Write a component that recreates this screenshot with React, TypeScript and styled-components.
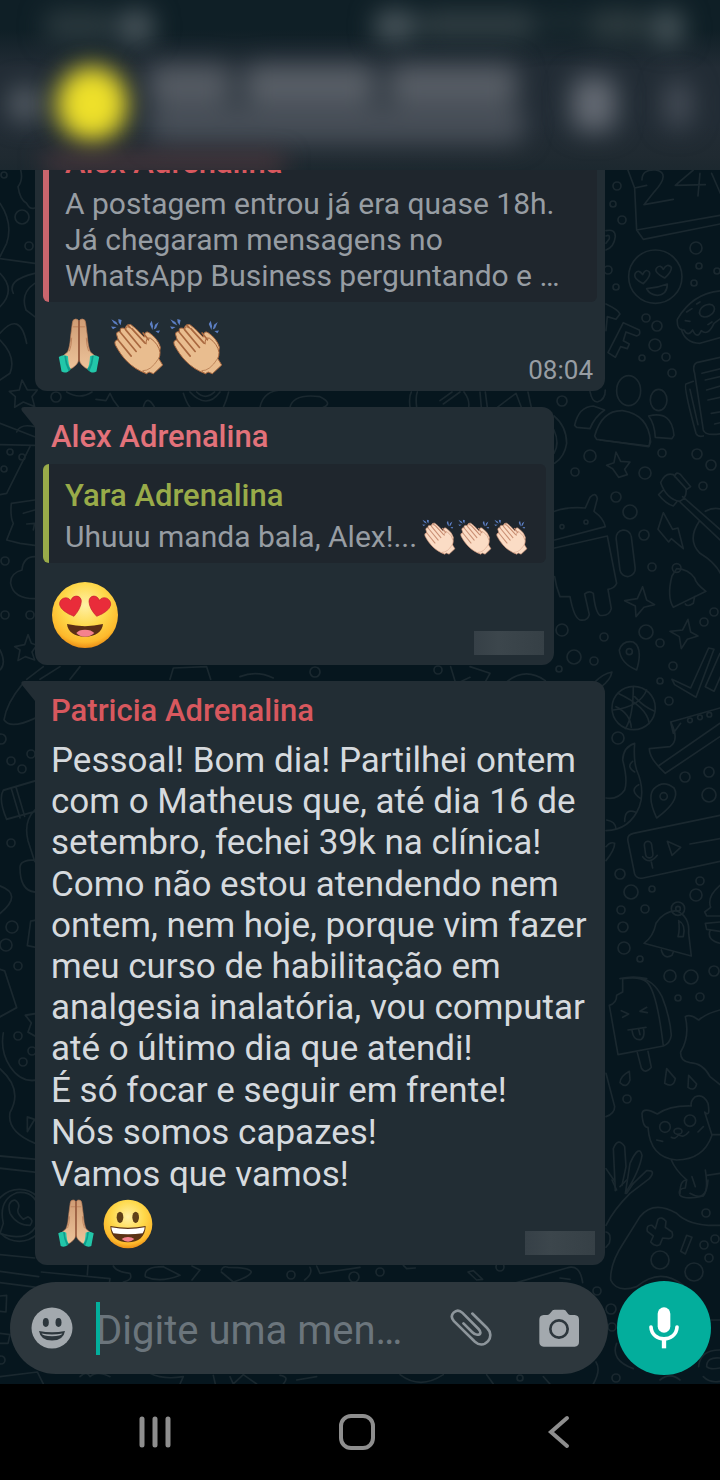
import React from "react";
import styled, { createGlobalStyle } from "styled-components";

const color = {
  wallpaper: "#06161e",
  doodle: "#1a282f",
  bubble: "#222d34",
  quote: "#1f262d",
  text: "#d6dade",
  muted: "#979da3",
  coral: "#e2727a",
  red: "#d8585e",
  olive: "#99ab49",
  teal: "#03ae9c",
  composer: "#2d373d",
  icon: "#a3a9ae",
};

const GlobalStyle = createGlobalStyle`
  * { box-sizing: border-box; }
  body { margin: 0; background: #000; font-family: Roboto, "Liberation Sans", sans-serif; }
  p { margin: 0; }
  button { border: 0; padding: 0; background: none; display: flex; align-items: center; justify-content: center; }
`;

const Screen = styled.div`
  display: flex;
  flex-direction: column;
  height: 100vh;
  overflow: hidden;
`;

/* ---------- header ---------- */

const Header = styled.header`
  position: relative;
  flex: none;
  height: 170px;
  overflow: hidden;
  background: linear-gradient(#0f1f26 0 30px, #222c35 68px 125px, #202a31 156px, #1c282f);
`;

const StatusBar = styled.div`
  display: flex;
  justify-content: space-between;
  height: 52px;
  padding: 10px 36px 0 44px;
  filter: blur(12px);
`;

const Cluster = styled.div`
  display: flex;
  gap: 4px;
`;

const Smudge = styled.span<{ $w: number; $h: number; $c: string }>`
  flex: none;
  width: ${(p) => p.$w}px;
  height: ${(p) => p.$h}px;
  border-radius: 12px;
  background: ${(p) => p.$c};
`;

const AppBar = styled.div`
  display: flex;
  align-items: center;
  height: 104px;
`;

const Back = styled.button`
  width: 50px;
  filter: blur(12px);
`;

const Avatar = styled.div`
  width: 72px;
  height: 76px;
  margin-left: 6px;
  border-radius: 50%;
  background: #eee02a;
  filter: blur(12px);
`;

const Title = styled.div`
  display: flex;
  flex-direction: column;
  gap: 2px;
  flex: 1;
  margin-left: 20px;
  filter: blur(13px);
`;

const TitleRow = styled.div`
  display: flex;
  gap: 12px;
`;

const HeaderButton = styled.button`
  width: 84px;
  filter: blur(13px);
`;

const Glow = styled.div`
  position: absolute;
  left: 44px;
  bottom: 0;
  width: 240px;
  height: 14px;
  background: #583a40;
  filter: blur(12px);
`;

/* ---------- conversation ---------- */

const Chat = styled.main`
  position: relative;
  flex: 1;
  min-height: 0;
  display: flex;
  flex-direction: column;
  justify-content: flex-end;
  overflow: hidden;
  background: ${color.wallpaper};
`;

const Wallpaper = styled.svg`
  position: absolute;
  inset: 0;
  width: 100%;
  height: 100%;
  fill: none;
  stroke: ${color.doodle};
  stroke-width: 5;
  stroke-linejoin: round;
  stroke-linecap: round;
`;

const Thread = styled.section`
  position: relative;
  display: flex;
  flex-direction: column;
  align-items: flex-start;
  gap: 16px;
  padding: 0 35px 16px;
`;

const Bubble = styled.article<{ $wide?: boolean }>`
  position: relative;
  max-width: 570px;
  width: ${(p) => (p.$wide ? "100%" : "fit-content")};
  padding: 12px 8px 10px;
  border-radius: 12px;
  background: ${color.bubble};
`;

const Tail = styled.svg`
  position: absolute;
  top: 0;
  left: -14px;
  width: 28px;
  height: 22px;
  fill: ${color.bubble};
`;

const Name = styled.h2<{ $c: string; $inset?: boolean }>`
  margin: 0;
  padding: 0 ${(p) => (p.$inset ? 8 : 0)}px;
  font-size: 31px;
  line-height: 36px;
  font-weight: 500;
  white-space: nowrap;
  color: ${(p) => p.$c};
`;

const Quote = styled.blockquote<{ $c: string }>`
  margin: 9px 0 0;
  padding: 14px 17px 8px 16px;
  border-left: 6px solid ${(p) => p.$c};
  border-radius: 6px;
  background: ${color.quote};
`;

const QuoteText = styled.p`
  display: flex;
  align-items: center;
  margin-top: 5px;
  font-size: 30px;
  line-height: 36px;
  white-space: pre-line;
  color: ${color.muted};
`;

const InlineEmojis = styled.span`
  display: flex;
  margin-left: 4px;
`;

const Body = styled.div`
  display: flex;
  flex-direction: column;
  gap: 1px;
  margin-top: 11px;
  padding: 0 8px;
  font-size: 35px;
  line-height: 41px;
  color: ${color.text};
`;

const Footer = styled.div<{ $top: number }>`
  display: flex;
  align-items: flex-end;
  justify-content: space-between;
  margin-top: ${(p) => p.$top}px;
  padding: 0 2px 0 8px;
`;

const Emojis = styled.div<{ $gap?: number }>`
  display: flex;
  gap: ${(p) => p.$gap ?? 0}px;
  padding-bottom: 6px;
`;

const Time = styled.time`
  padding-right: 2px;
  font-size: 26px;
  line-height: 22px;
  color: ${color.muted};
`;

const HiddenTime = styled.span`
  width: 70px;
  height: 24px;
  background: linear-gradient(90deg, #364047, #3c464c 35%, #364046);
`;

/* ---------- composer ---------- */

const Composer = styled.form`
  position: relative;
  display: flex;
  align-items: center;
  gap: 9px;
  padding: 0 9px 9px 10px;
`;

const Field = styled.div`
  flex: 1;
  min-width: 0;
  display: flex;
  align-items: center;
  height: 92px;
  padding: 0 28px 0 21px;
  border-radius: 46px;
  background: ${color.composer};
`;

const InputWrap = styled.label`
  position: relative;
  flex: 1;
  min-width: 0;
  margin-left: 23px;
  &::before {
    content: "";
    position: absolute;
    left: 0;
    top: 0;
    width: 4px;
    height: 53px;
    background: ${color.teal};
  }
`;

const Input = styled.input`
  display: block;
  width: 100%;
  height: 53px;
  border: 0;
  padding: 4px 0 0;
  outline: 0;
  background: none;
  font-family: inherit;
  font-size: 40px;
  color: ${color.text};
  &::placeholder { color: #6b757c; opacity: 1; }
`;

const Tools = styled.div`
  display: flex;
  align-items: center;
  gap: 46px;
`;

const Mic = styled.button`
  flex: none;
  width: 94px;
  height: 94px;
  border-radius: 50%;
  background: ${color.teal};
`;

const NavBar = styled.nav`
  flex: none;
  display: flex;
  align-items: center;
  justify-content: space-around;
  height: 96px;
  padding: 0 61px 0 55px;
  background: #000;
`;

/* ---------- drawings ---------- */

const Pray = ({ w, h }: { w: number; h: number }) => (
  <svg width={w} height={h} viewBox="-10 0 145 168" role="img" aria-label="Mãos unidas">
    <defs>
      <linearGradient id="praySkin" x1="0" y1="0" x2="0" y2="1">
        <stop offset="0" stopColor="#cf9c74" />
        <stop offset="1" stopColor="#edc49b" />
      </linearGradient>
    </defs>
    {[undefined, "translate(125 0) scale(-1 1)"].map((t, i) => (
      <g key={i} transform={t}>
        <path d="M62 10Q60 3 53 3Q44 3 43 14L38 52Q36 85 29 100L14 113L33 152Q58 142 62 122Z" fill="url(#praySkin)" stroke="#b97c56" strokeWidth="2" />
        <path d="M45 26H60M41 58Q40 84 34 98" stroke="#b97c56" strokeWidth="2.5" fill="none" />
        <path d="M3 115Q16 106 30 113Q31 140 38 150Q26 166 11 158Q8 140 3 115Z" fill="#22c7a9" />
        <path d="M25 112Q26 138 38 150L32 158Q21 135 19 111Z" fill="#109b8c" />
      </g>
    ))}
    <path d="M62.500 8V128" stroke="#8f4f34" strokeWidth="4" />
  </svg>
);

const Clap = ({ w, h, light }: { w: number; h: number; light?: boolean }) => {
  const skin = light ? "#fbdcc5" : "#e9bd8f";
  const edge = light ? "#c98f74" : "#a9683f";
  return (
    <svg width={w} height={h} viewBox="0 0 172 172" role="img" aria-label="Palmas">
      <g fill="#5c7fc4">
        <path d="M7 4L22 12L28 23L15 16ZM28 3L38 6L35 22L29 13ZM6 26L23 27L12 34Z" />
        <path d="M129 8L133 25L131 36L123 18ZM150 12L142 31L135 35L139 20ZM154 38L140 39L149 46Z" />
      </g>
      <path d="M48 36Q50 18 66 20L82 33L106 58Q108 35 122 45Q147 62 155 88L149 126L92 122Z" fill={skin} stroke={edge} strokeWidth="3" />
      <path d="M113 168C66 151 39 119 19 81Q14 67 28 66L23 50Q22 39 35 42Q30 28 45 31L50 35Q52 21 67 31L112 79Q111 57 125 61Q150 79 154 104Q154 116 150 122L162 142L134 168L121 163Z" fill={skin} stroke={edge} strokeWidth="3" strokeLinejoin="round" />
      <path d="M28 67L67 115M34 43L82 101M50 35L95 89M69 32L108 75M103 45L119 66M57 22L64 29" stroke={edge} strokeWidth="5" fill="none" strokeLinecap="round" />
      <path d="M113 168Q104 164 102 159Q126 160 150 122" fill="none" stroke={edge} strokeWidth="2" />
    </svg>
  );
};

const FaceGradient = ({ id }: { id: string }) => (
  <defs>
    <radialGradient id={id} cx=".5" cy=".35" r=".66">
      <stop offset="0" stopColor="#fff0a6" />
      <stop offset=".5" stopColor="#fed94b" />
      <stop offset=".85" stopColor="#fdb92c" />
      <stop offset="1" stopColor="#e98a14" />
    </radialGradient>
  </defs>
);

const HeartEyes = () => (
  <svg width="68" height="68" viewBox="153 541 204 204" role="img" aria-label="Olhos de coração">
    <FaceGradient id="faceA" />
    <circle cx="255" cy="643" r="99" fill="url(#faceA)" />
    <g fill="#e92c3a" stroke="#c4202f" strokeWidth="2">
      <path d="M222 647Q184 632 179 613C176 593 202 583 212 600C219 580 244 583 244 602Q243 623 222 647Z" />
      <path d="M290 647Q268 624 267 603C267 583 291 580 298 599C309 583 334 593 332 613Q327 633 290 647Z" />
    </g>
    <path d="M201 670Q255 683 309 670C307 694 286 708 255 708S203 694 201 670Z" fill="#5b2f16" />
    <path d="M229 697Q236 687 255 687T283 697Q272 708 255 708T229 697Z" fill="#f5828e" />
  </svg>
);

const Grin = () => (
  <svg width="50" height="50" viewBox="311 57 150 150" role="img" aria-label="Sorriso">
    <FaceGradient id="faceB" />
    <circle cx="386" cy="132" r="73" fill="url(#faceB)" />
    <g fill="#5f4018">
      <ellipse cx="362" cy="112" rx="10" ry="17" />
      <ellipse cx="409" cy="112" rx="10" ry="17" />
    </g>
    <path d="M333 138Q386 148 439 138C438 170 418 187 386 187S334 170 333 138Z" fill="#5b3315" />
    <path d="M336 142Q386 152 436 142Q436 152 430 160Q386 166 342 160Q336 152 336 142Z" fill="#fff" />
    <path d="M367 177Q374 171 386 171T405 177Q396 185 386 185T367 177Z" fill="#f5828e" />
  </svg>
);

const SmileyIcon = () => (
  <svg width="42" height="42" viewBox="0 0 42 42" aria-hidden="true">
    <circle cx="21" cy="21" r="20.500" fill={color.icon} />
    <g fill={color.composer}>
      <ellipse cx="14.800" cy="15.500" rx="3" ry="4.400" />
      <ellipse cx="27.500" cy="15.500" rx="3" ry="4.400" />
      <path d="M8 24Q21 26.500 34 24Q32.500 33.500 21 33.500T8 24Z" />
    </g>
    <path d="M10.500 26.500Q21 28.700 31.500 26.500Q30 29.300 21 29.300T10.500 26.500Z" fill={color.icon} />
  </svg>
);

const ClipIcon = () => (
  <svg width="42" height="40" viewBox="269 387 128 118" fill="none" stroke="#8d959b" strokeWidth="8" strokeLinecap="round" strokeLinejoin="round" aria-hidden="true">
    <path d="M337 402L382 446C394 458 395 475 385 486C373 499 357 499 345 488L281 425C273 416 272 407 280 399C288 391 298 391 307 400L356 449C364 457 363 466 356 466C350 468 343 465 337 459L310 432" />
  </svg>
);

const CameraIcon = () => (
  <svg width="42" height="40" viewBox="534 380 126 118" aria-hidden="true">
    <path d="M571 394L578 386Q580 384 584 384H610Q614 384 616 386L624 396Q626 400 632 400H644Q657 401 657 414V481Q657 494 644 495H551Q538 494 538 481V414Q538 401 551 400H562Q567 400 571 394Z" fill={color.icon} />
    <circle cx="597" cy="442" r="26" fill="none" stroke={color.composer} strokeWidth="8" />
  </svg>
);

const MicIcon = () => (
  <svg width="32" height="44" viewBox="866 380 96 132" aria-hidden="true">
    <rect x="895" y="384" width="38" height="76" rx="19" fill="#fff" />
    <path d="M875 443C877 490 951 490 953 443" fill="none" stroke="#fff" strokeWidth="11" strokeLinecap="round" />
    <path d="M914 479V507" stroke="#fff" strokeWidth="13" />
  </svg>
);

/* Rings are listed as [x, y, radius] in window coordinates. */
const rings: number[][] = [
  [617, 186, 4], [613, 204, 3], [622, 220, 4], [616, 287, 3], [608, 270, 4], [696, 248, 6], [699, 266, 3], [694, 283, 3], [717, 271, 3],
  [646, 318, 4], [657, 326, 5], [655, 345, 6], [642, 358, 3], [666, 357, 4], [672, 373, 4], [562, 401, 5], [590, 456, 6], [697, 454, 5], [662, 453, 4], [711, 465, 5],
  [575, 472, 4], [645, 473, 6], [703, 486, 4], [616, 497, 5], [630, 512, 7], [644, 535, 5], [652, 567, 4], [714, 612, 4],
  [704, 622, 4], [562, 630, 6], [604, 637, 4], [646, 632, 7], [660, 643, 4], [574, 657, 7], [594, 661, 4], [559, 669, 3], [673, 666, 4], [660, 681, 3], [669, 701, 4],
  [618, 738, 6], [685, 777, 5], [709, 772, 5], [709, 795, 7], [620, 874, 5], [631, 892, 7], [652, 889, 3], [700, 881, 4], [696, 895, 6], [621, 910, 4], [645, 909, 4],
  [623, 927, 5], [624, 948, 6], [640, 959, 3], [670, 976, 6], [691, 977, 7], [714, 971, 5], [678, 998, 3], [700, 997, 4], [627, 1099, 4], [706, 1213, 4], [704, 1245, 4],
  [715, 1239, 4], [709, 1258, 4], [660, 1260, 9], [694, 1272, 9], [597, 1291, 4], [611, 1309, 5], [612, 1327, 4], [616, 1378, 4],
  [4, 175, 3], [22, 217, 7], [29, 246, 4], [56, 397, 5], [10, 452, 3], [22, 457, 3], [4, 469, 3], [5, 561, 4], [5, 615, 4], [30, 615, 4],
  [1, 739, 5], [11, 761, 4], [22, 769, 4], [31, 754, 4], [11, 843, 4], [12, 927, 6], [6, 945, 6], [18, 966, 4], [18, 1036, 4], [23, 1062, 4], [32, 1051, 4],
  [1, 1360, 4], [291, 1275, 4], [354, 1277, 5], [380, 1272, 4], [438, 670, 4], [315, 672, 5], [520, 1378, 3], [500, 1267, 4],
];

const Doodles = () => (
  <Wallpaper viewBox="0 170 720 1214" preserveAspectRatio="xMidYMid slice" aria-hidden="true">
    <g strokeWidth="1.700">
      {rings.map(([x, y, r], i) => (
        <circle key={i} cx={x} cy={y} r={r} />
      ))}
    </g>
    {/* calendar, heart-eyed face, donut, people, notebook */}
    <g transform="translate(360 160) scale(.3333)">
      <path d="M800 20L824 84L830 210L850 238L1090 190M830 210L1080 166M824 84L860 76M846 60Q846 28 886 30Q934 38 884 94L852 134L940 118M1000 30L946 76L1036 74M1020 40L1014 108M1055 40L1090 120" />
      <circle cx="886" cy="350" r="80" />
      <path d="M850 371Q818 356 826 340Q836 326 848 344Q856 324 868 336Q874 348 850 371ZM914 354Q880 336 890 324Q902 312 910 328Q922 308 934 322Q936 336 914 354ZM860 386Q892 384 922 372Q922 404 892 406Q868 404 860 386ZM738 212Q766 206 766 230Q762 262 738 270M738 228Q750 222 748 236L738 250" />
      <path d="M1090 392Q1000 396 952 478Q950 512 972 510Q984 532 998 510Q1012 540 1024 512Q1044 530 1062 490L1090 470M964 508Q976 550 1020 550L1090 530M980 456L996 446M1010 432L1020 426M976 482L990 484M1044 494L1056 486" />
      <ellipse cx="1041" cy="452" rx="24" ry="17" transform="rotate(-30 1041 452)" />
      <path d="M738 432Q776 450 780 462L768 478L742 470L738 512M790 488L838 510Q844 524 830 528L798 516L790 542L808 552L802 566L782 560L766 592L744 578Z" />
      <ellipse cx="806" cy="692" rx="36" ry="45" /><ellipse cx="896" cy="720" rx="25" ry="32" /><path d="M690 694Q696 726 712 726Q736 720 736 690" />
      <path d="M704 828Q726 750 788 752Q866 764 872 846L866 860L710 838ZM644 796Q656 740 700 738L734 750Q704 770 690 806L650 802ZM866 768Q936 750 942 826L936 836L886 832Q884 792 866 768ZM582 768Q620 800 620 850Q614 890 584 910M582 810Q600 850 582 880" />
      <path d="M1090 590L1010 608Q996 616 1004 640L1030 810Q1036 830 1090 820M1000 664L978 672Q970 680 1008 820Q1014 832 1030 828M1026 640L1090 624M1036 660L1090 648M1040 690L1090 676M1044 720L1090 710M1054 760L1090 754M1064 792L1090 786M990 688L1014 794" />
      <path d="M150 742Q146 710 154 696M170 742Q166 710 172 696M240 722L276 696M250 732L300 696M312 696Q330 720 326 742M360 696L364 742M376 696L382 742M412 742L468 700L484 742M504 696L514 742" />
    </g>
    {/* android, guitar, bell, stars, basketball, shoe */}
    <g transform="translate(400 440) scale(.3333)">
      <path d="M464 214Q500 200 556 204L570 172Q588 154 592 176L582 214Q612 236 616 260L464 300M464 324L622 288L650 430Q644 446 624 448L634 506Q628 530 600 526Q586 516 580 460Q568 450 554 462L568 524Q562 544 540 540Q522 534 510 470L480 470Q468 440 464 410" />
      <circle cx="486" cy="260" r="6" /><circle cx="558" cy="246" r="6" />
      <rect x="654" y="270" width="46" height="140" rx="23" transform="rotate(-7 677 340)" />
      <path d="M648 36L662 64L690 66L674 88L682 104L656 112L638 86L620 76L642 68ZM600 0L748 18L750 0M782 128Q796 96 820 104L858 146Q862 172 840 184Q800 178 782 128ZM824 110Q828 92 842 104L872 140L858 150M788 152L776 164Q796 190 820 198L830 186M848 170L960 268M840 186L960 300M898 244Q860 300 900 340Q950 370 966 410M916 214Q940 200 966 208" />
      <path d="M790 218L774 268L806 306L814 296L850 326L834 264L818 268ZM830 386L816 408Q800 470 820 502L918 454Q888 432 884 414Q866 388 830 386ZM856 492Q862 502 880 490L884 470M728 440L740 480L764 494L732 502L708 530L706 498L674 482L712 476ZM864 538L872 576L894 588L862 598L844 626L838 590L810 574L848 570Z" />
      <circle cx="830" cy="384" r="13" /><circle cx="688" cy="635" r="9" />
      <path d="M710 690Q662 670 658 630Q668 600 700 606Q730 624 710 690ZM816 718L872 744L926 624L942 628L888 772L824 734ZM960 640L916 740L942 754L966 700M580 730Q610 700 636 696Q632 720 604 740M320 726Q376 680 436 722M152 680L166 726M210 680L270 700L256 726M180 726L210 712" />
      <circle cx="701" cy="804" r="65" />
      <path d="M654 760Q740 800 748 850M640 810Q720 800 740 750M700 740Q700 830 676 866M704 770Q730 800 764 814M648 800Q690 820 694 862M960 804L812 846Q840 900 810 920L748 926Q748 956 796 1000L960 890M812 846L820 880L842 850M778 976L960 850" />
      <circle cx="870" cy="841" r="7" /><circle cx="900" cy="832" r="7" /><circle cx="928" cy="824" r="7" />
    </g>
    {/* tentacle, map pin, voice note, bell */}
    <g transform="translate(590 680) scale(.3333)">
      <path d="M134 190Q100 200 98 240Q114 300 104 330Q84 360 48 354M134 190Q130 240 140 270Q166 330 148 380Q120 450 48 452M128 244Q108 260 134 276M146 314Q116 330 152 356M104 424Q104 384 136 396M50 420Q76 424 78 446M200 414Q170 350 192 326Q220 298 252 324Q274 360 200 414ZM390 406L130 460Q110 464 114 484L134 582Q140 598 160 594L390 544M300 492L390 476M232 484L272 502L246 526ZM48 500Q60 484 74 490Q74 510 48 542" />
      <circle cx="221" cy="349" r="11" />
      <rect x="165" y="484" width="22" height="50" rx="11" transform="rotate(-8 176 509)" />
      <path d="M158 530Q178 556 202 526M184 546L188 564M162 790Q190 770 198 730Q220 694 260 692Q300 710 296 760L304 828ZM214 810Q222 840 246 826L250 816M266 722Q288 732 280 770L264 770Q270 750 266 722" />
      <circle cx="264" cy="686" r="20" /><circle cx="264" cy="686" r="7" />
      <path d="M390 616Q350 650 362 682L344 696L350 708L390 708M390 726L346 730L350 748L390 754M360 752Q350 780 390 790M90 896Q130 886 170 896" />
    </g>
    {/* ice lolly, splash, kitten, plant, game controller */}
    <g transform="translate(590 960) scale(.3333)">
      <path d="M98 56Q150 48 170 66Q200 90 220 258L84 284L58 136Q80 130 80 106L98 96ZM150 54Q190 60 216 110Q240 170 244 226Q240 250 220 258M142 278L154 324Q166 344 184 322L174 274M94 152L116 162L98 172M170 142L150 154L172 158M114 210L168 202M126 210Q130 244 154 238Q166 230 160 204M146 208L150 224" />
      <path d="M118 334Q90 350 90 368Q110 388 120 360ZM230 326L256 356Q250 386 224 370ZM296 346L320 372Q314 396 294 382ZM390 150Q350 160 326 180Q300 160 286 170Q300 230 272 276Q270 304 300 308Q340 310 360 350L390 374" />
      <path d="M202 462Q160 440 156 460Q158 504 174 502Q180 594 260 600Q340 600 366 526L344 456Q362 474 354 430Q340 400 316 410Q300 424 304 438Q240 436 202 462ZM244 532Q256 540 266 524Q280 536 296 516M200 540L218 544M324 516L340 500M244 600Q256 630 290 660L286 684Q262 686 270 706Q286 720 340 708Q356 690 346 630M390 640L350 646M306 650L316 680M366 524L390 524" />
      <circle cx="225" cy="501" r="16" /><circle cx="300" cy="482" r="17" /><ellipse cx="264" cy="514" rx="12" ry="9" />
      <path d="M76 692L70 566Q84 530 104 560L108 620L96 676M106 700L120 610Q148 550 156 586Q150 630 106 700M124 676L170 632Q200 630 178 656L120 700Q70 750 48 796M48 626L74 664M48 340L74 440Q74 460 48 470M48 816Q66 820 58 850L48 862" />
      <path d="M62 960Q60 910 100 850L150 770Q190 720 260 760Q300 800 390 796M196 806L204 778Q216 768 228 784L226 802L246 816Q252 836 236 836L218 834L210 854Q196 862 182 846L190 828L172 814Q168 794 186 796ZM290 826L306 832L286 882L272 874Z" />
      <path d="M62 960Q80 1000 140 980Q210 920 280 976" />
    </g>
    {/* left edge */}
    <g transform="translate(0 160) scale(.3333)">
      <path d="M62 30Q70 60 54 80Q60 120 80 130Q90 150 104 144M0 130Q40 190 20 250L0 290M0 296L104 310M0 340Q50 390 0 440M40 400Q20 360 104 340M0 520Q60 450 80 550M104 370Q60 400 78 450L104 470M0 540Q50 590 30 640L0 660M66 660L82 690L112 690L96 710L104 740L70 726L44 742L46 710L28 694L58 690ZM200 696Q240 720 276 696M288 718L318 722L330 700L340 720L356 742M430 742Q440 700 464 742M550 700Q560 730 570 742M570 696Q620 750 660 696M590 696Q616 722 644 696M686 696Q680 720 670 742M780 742Q790 690 850 690M870 742Q880 700 960 710Q1000 730 970 742" />
    </g>
    <g transform="translate(0 400) scale(.3333)">
      <path d="M0 70L104 110M0 134L104 136M90 140L20 280L0 284M50 96Q60 70 104 80M104 300L34 310Q30 350 40 370L20 420L60 430L104 436M70 340L104 330M80 372L104 370L100 390M104 470Q70 470 66 510Q30 520 32 550Q40 596 104 596M84 704L94 730L110 736L96 756L104 780L76 770L54 782L60 750L44 740L74 734ZM0 750Q20 790 0 810M80 838L130 800M120 838L180 800M210 838L240 800M510 838L520 804L620 800L632 838M720 830Q770 810 820 834" />
    </g>
    <g transform="translate(0 680) scale(.3333 .3827)">
      <path d="M66 12Q20 60 12 104Q30 130 104 100M104 264L10 288Q-6 310 20 364L104 344M34 284L60 360M48 280L74 356M104 340Q70 370 84 420L104 474M104 470Q60 470 60 490Q60 550 104 554M0 538Q70 560 0 610M104 628L92 630L82 694L104 698M0 756L14 760L50 856L0 880M104 872L76 876L94 896L84 920L104 930M10 922Q0 970 30 1010Q60 1050 104 1046M0 1016Q70 1070 30 1130Q20 1180 104 1210M82 1142L104 1148L82 1180ZM0 1244L104 1252M0 1276L104 1286" />
    </g>
    {/* seal and shapes around the composer */}
    <g transform="translate(0 1180) scale(.3333)">
      <circle cx="58" cy="106" r="78" />
      <path d="M0 160L10 130Q-6 60 50 38Q110 30 120 100Q110 170 50 170Q30 170 0 160M44 60Q20 64 30 100Q50 136 90 136Q104 120 84 110L70 118Q50 100 54 88Q62 70 44 60M0 224L104 234M0 274L116 290M124 276L330 296L328 310M0 308L110 322M264 256L262 284M340 258Q350 276 390 280Q400 300 370 306M490 260Q430 260 436 290Q480 310 540 286L490 260M576 258L600 270L576 300M664 270Q670 256 684 262Q750 262 754 276Q750 290 700 306L664 276M930 262Q940 280 914 300M950 258L960 280L1080 262M0 348L20 346L18 396L0 394M0 460L30 464L24 490L0 490M0 590L112 576L130 612M240 590Q260 570 270 590Q290 570 330 590M450 580Q490 600 550 590L540 612M640 586L646 612M690 590L700 612L730 584L770 612M840 586Q870 590 850 612M890 600L950 590" />
    </g>
    <g transform="translate(360 1180) scale(.3333)">
      <path d="M470 308L620 264Q660 250 668 308M600 294L630 298M324 276L340 272L368 298L350 300ZM130 256L140 266L166 264M770 490Q750 540 820 566M1080 420L1054 420M1016 560Q1020 510 1080 510M1030 590Q1050 610 1080 604M1080 534Q1040 530 1040 560Q1050 570 1080 564M120 584Q180 630 250 584M380 584L400 612M550 590L570 612M708 546Q724 570 700 612M900 600Q930 576 960 600M756 0L770 30M780 20L800 0M800 40L820 10M960 40Q960 0 980 0M990 40Q1040 70 1044 0" />
    </g>
  </Wallpaper>
);

const BubbleTail = () => (
  <Tail viewBox="0 0 28 22" aria-hidden="true">
    <path d="M3 0H28V22H14V20L1 4Q-1 0 3 0Z" />
  </Tail>
);

export default function App() {
  return (
    <Screen>
      <GlobalStyle />
      <Header>
        <StatusBar>
          <Cluster>
            <Smudge $w={70} $h={32} $c="#2a383d" />
            <Smudge $w={36} $h={34} $c="#48545a" />
          </Cluster>
          <Cluster>
            <Smudge $w={42} $h={32} $c="#48545a" />
            <Smudge $w={116} $h={30} $c="#303d42" />
            <Smudge $w={44} $h={26} $c="#1b2a30" />
            <Smudge $w={60} $h={30} $c="#2e3b3f" />
            <Smudge $w={32} $h={36} $c="#455257" />
          </Cluster>
        </StatusBar>
        <AppBar>
          <Back type="button" aria-label="Voltar">
            <Smudge $w={34} $h={36} $c="#505860" />
          </Back>
          <Avatar />
          <Title>
            <TitleRow>
              <Smudge $w={84} $h={38} $c="#565c64" />
              <Smudge $w={132} $h={38} $c="#5a6068" />
              <Smudge $w={130} $h={38} $c="#585e66" />
            </TitleRow>
            <Smudge $w={376} $h={38} $c="#484f58" />
          </Title>
          <HeaderButton type="button" aria-label="Ligar">
            <Smudge $w={44} $h={54} $c="#646a73" />
          </HeaderButton>
          <HeaderButton type="button" aria-label="Mais opções">
            <Smudge $w={26} $h={48} $c="#474e58" />
          </HeaderButton>
        </AppBar>
        <Glow />
      </Header>

      <Chat>
        <Doodles />
        <Thread>
          <Bubble $wide>
            <Quote $c="#c9656d">
              <Name $c={color.red}>Alex Adrenalina</Name>
              <QuoteText>
                {"A postagem entrou já era quase 18h.\nJá chegaram mensagens no\nWhatsApp Business perguntando e …"}
              </QuoteText>
            </Quote>
            <Footer $top={16}>
              <Emojis $gap={2}>
                <Pray w={56} h={57} />
                <Clap w={57} h={57} />
                <Clap w={57} h={57} />
              </Emojis>
              <Time>08:04</Time>
            </Footer>
          </Bubble>

          <Bubble>
            <BubbleTail />
            <Name $c={color.coral} $inset>Alex Adrenalina</Name>
            <Quote $c={color.olive}>
              <Name $c={color.olive}>Yara Adrenalina</Name>
              <QuoteText>
                Uhuuu manda bala, Alex!...
                <InlineEmojis>
                  <Clap w={36} h={36} light />
                  <Clap w={36} h={36} light />
                  <Clap w={36} h={36} light />
                </InlineEmojis>
              </QuoteText>
            </Quote>
            <Footer $top={18}>
              <Emojis>
                <HeartEyes />
              </Emojis>
              <HiddenTime />
            </Footer>
          </Bubble>

          <Bubble $wide>
            <BubbleTail />
            <Name $c={color.red} $inset>Patricia Adrenalina</Name>
            <Body>
              <p>Pessoal! Bom dia! Partilhei ontem com o Matheus que, até dia 16 de setembro, fechei 39k na clínica!</p>
              <p>Como não estou atendendo nem ontem, nem hoje, porque vim fazer meu curso de habilitação em analgesia inalatória, vou computar até o último dia que atendi!</p>
              <p>É só focar e seguir em frente!</p>
              <p>Nós somos capazes!</p>
              <p>Vamos que vamos!</p>
            </Body>
            <Footer $top={4}>
              <Emojis $gap={2}>
                <Pray w={50} h={50} />
                <Grin />
              </Emojis>
              <HiddenTime />
            </Footer>
          </Bubble>
        </Thread>

        <Composer onSubmit={(e) => e.preventDefault()}>
          <Field>
            <button type="button" aria-label="Emoji"><SmileyIcon /></button>
            <InputWrap>
              <Input aria-label="Mensagem" placeholder="Digite uma men…" />
            </InputWrap>
            <Tools>
              <button type="button" aria-label="Anexar"><ClipIcon /></button>
              <button type="button" aria-label="Câmera"><CameraIcon /></button>
            </Tools>
          </Field>
          <Mic type="button" aria-label="Gravar áudio"><MicIcon /></Mic>
        </Composer>
      </Chat>

      <NavBar>
        <button type="button" aria-label="Recentes">
          <svg width="34" height="34" viewBox="0 0 34 34" stroke="#8e8e8e" strokeWidth="5" strokeLinecap="round">
            <path d="M4 4V30M17 4V30M30 4V30" />
          </svg>
        </button>
        <button type="button" aria-label="Início">
          <svg width="36" height="36" viewBox="0 0 36 36" fill="none" stroke="#8e8e8e" strokeWidth="4">
            <rect x="2" y="2" width="32" height="32" rx="10" />
          </svg>
        </button>
        <button type="button" aria-label="Voltar">
          <svg width="34" height="34" viewBox="0 0 34 34" fill="none" stroke="#8e8e8e" strokeWidth="4" strokeLinecap="round">
            <path d="M25 3L9 17L25 31" />
          </svg>
        </button>
      </NavBar>
    </Screen>
  );
}
